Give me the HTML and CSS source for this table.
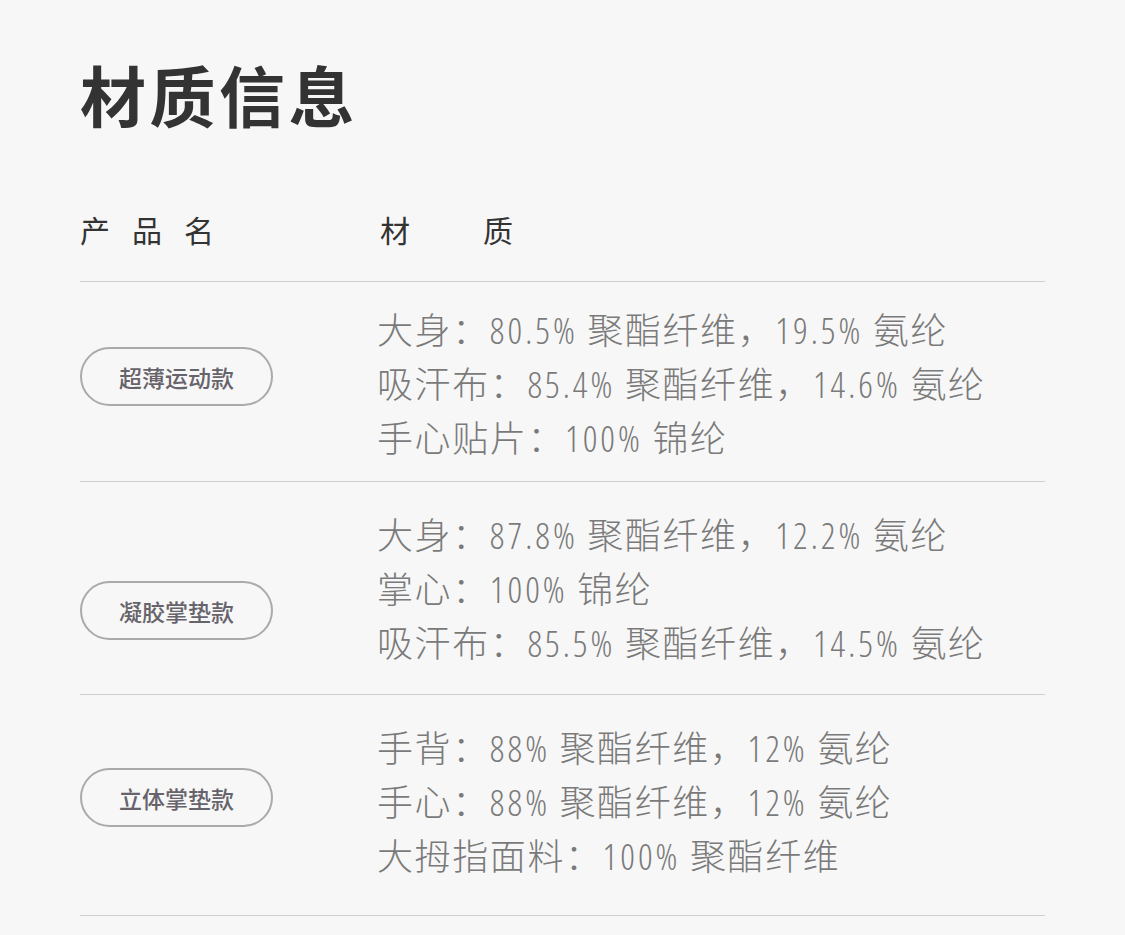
FILE: index.html
```html
<!DOCTYPE html>
<html lang="zh-CN">
<head>
<meta charset="utf-8">
<title>材质信息</title>
<link rel="stylesheet" href="styles.css">
</head>
<body>
<main class="page">
  <h1 class="title">材质信息</h1>
  <div class="head">
    <div class="head-name">产品名</div>
    <div class="head-mat"><span>材</span><span>质</span></div>
  </div>
  <section class="row row-1">
    <div class="pill">超薄运动款</div>
    <div class="lines">
      <p>大身：<span class="num">80.5%</span> 聚酯纤维，<span class="num">19.5%</span> 氨纶</p>
      <p>吸汗布：<span class="num">85.4%</span> 聚酯纤维，<span class="num">14.6%</span> 氨纶</p>
      <p>手心贴片：<span class="num">100%</span> 锦纶</p>
    </div>
  </section>
  <section class="row row-2">
    <div class="pill">凝胶掌垫款</div>
    <div class="lines">
      <p>大身：<span class="num">87.8%</span> 聚酯纤维，<span class="num">12.2%</span> 氨纶</p>
      <p>掌心：<span class="num">100%</span> 锦纶</p>
      <p>吸汗布：<span class="num">85.5%</span> 聚酯纤维，<span class="num">14.5%</span> 氨纶</p>
    </div>
  </section>
  <section class="row row-3">
    <div class="pill">立体掌垫款</div>
    <div class="lines">
      <p>手背：<span class="num">88%</span> 聚酯纤维，<span class="num">12%</span> 氨纶</p>
      <p>手心：<span class="num">88%</span> 聚酯纤维，<span class="num">12%</span> 氨纶</p>
      <p>大拇指面料：<span class="num">100%</span> 聚酯纤维</p>
    </div>
  </section>
</main>
</body>
</html>
```

FILE: styles.css
```css
html, body {
  margin: 0;
  padding: 0;
  background: #f7f7f7;
}

body {
  font-family: "Noto Sans CJK SC", "Noto Sans", sans-serif;
  color: #333;
}

.page {
  padding: 0 80px;
}

.title {
  margin: 0;
  padding-top: 55px;
  font-size: 66px;
  line-height: 76px;
  font-weight: 700;
  letter-spacing: 3.5px;
  color: #333;
}

.head {
  display: grid;
  grid-template-columns: 297px 1fr;
  margin-top: 78px;
  padding-bottom: 32px;
  border-bottom: 1px solid #cfcfcf;
  font-size: 30px;
  line-height: 40px;
  color: #333;
}

.head-name {
  letter-spacing: 22px;
}

.head-mat {
  display: flex;
  gap: 73px;
  padding-left: 3px;
}

.row {
  display: grid;
  grid-template-columns: 297px 1fr;
  align-items: start;
  border-bottom: 1px solid #cfcfcf;
}

.pill {
  box-sizing: border-box;
  width: 193px;
  height: 59px;
  border: 2px solid #aaa9ab;
  border-radius: 30px;
  display: flex;
  align-items: center;
  justify-content: center;
  font-size: 23px;
  font-weight: 500;
  color: #67636b;
}

.lines p {
  margin: 0;
  height: 54px;
  font-size: 36px;
  line-height: 54px;
  font-weight: 200;
  letter-spacing: 1.6px;
  color: #7a7a7a;
  white-space: nowrap;
}

.num {
  font-family: "Open Sans", "Noto Sans", sans-serif;
  font-stretch: 85%;
  font-weight: 300;
  letter-spacing: 3px;
  line-height: 1;
}

.row-1 .lines { padding: 19px 0 18px; }
.row-1 .pill { margin-top: 65px; }

.row-2 .lines { padding: 24px 0 26px; }
.row-2 .pill { margin-top: 99px; }

.row-3 .lines { padding: 24px 0 34px; }
.row-3 .pill { margin-top: 73px; }
```
